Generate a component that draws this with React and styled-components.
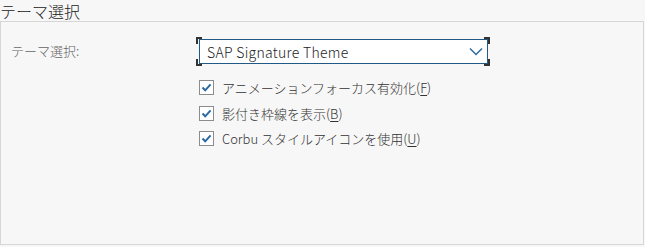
import React from "react";
import styled, { createGlobalStyle } from "styled-components";

const Global = createGlobalStyle`
  html, body { margin: 0; padding: 0; background: #f7f7f7; }
  body { font-family: "Noto Sans CJK JP", "Noto Sans", sans-serif; font-weight: 300; }
`;

const Page = styled.div`
  width: 645px;
  height: 247px;
  box-sizing: border-box;
  padding-right: 1px;
  display: flex;
  flex-direction: column;
`;

const Title = styled.div`
  font-size: 16px;
  line-height: 19px;
  height: 21px;
  box-sizing: border-box;
  padding-top: 2px;
  color: #222;
`;

const Group = styled.div`
  flex: 1;
  margin-bottom: 2px;
  border: 1px solid #d6d6d6;
  background: #f7f7f7;
  display: grid;
  grid-template-columns: 195px 1fr;
  align-content: start;
  padding-top: 15px;
`;

const Label = styled.div`
  padding-left: 10px;
  font-size: 13px;
  color: #666;
  height: 28px;
  line-height: 28px;
`;

const Controls = styled.div`
  display: flex;
  flex-direction: column;
`;

const SelectWrap = styled.div`
  position: relative;
  width: 294px;
  height: 29px;
  box-sizing: border-box;
  padding: 2px 2px 2px 3px;
`;

const Corner = styled.span`
  position: absolute;
  width: 4px;
  height: 5px;
  border-color: #333;
  border-style: solid;
  border-width: 0;
  ${(p) => (p.$v === "t" ? "top: 0;" : "bottom: 0;")}
  ${(p) => (p.$h === "l" ? "left: 0;" : "right: 0;")}
  ${(p) => (p.$v === "t" ? "border-top-width: 2px;" : "border-bottom-width: 2px;")}
  ${(p) => (p.$h === "l" ? "border-left-width: 2px;" : "border-right-width: 2px;")}
`;

const SelectBox = styled.div`
  height: 100%;
  box-sizing: border-box;
  border: 1px solid #215a86;
  background: #fff;
  display: flex;
  align-items: center;
  justify-content: space-between;
  padding: 0 4px 0 7px;
  font-size: 14px;
  color: #222;
  letter-spacing: 0.3px;
`;

const Options = styled.div`
  display: flex;
  flex-direction: column;
  margin-top: 14px;
  gap: 10.5px;
`;

const Row = styled.label`
  display: flex;
  align-items: center;
  gap: 8px;
  font-size: 13px;
  color: #333;
  height: 15px;
  padding-left: 3px;
`;

const Box = styled.span`
  width: 15px;
  height: 15px;
  box-sizing: border-box;
  border: 1px solid #8c8c8c;
  background: #fff;
  display: flex;
  align-items: center;
  justify-content: center;
`;

const Mn = styled.span`
  text-decoration: underline;
  text-underline-offset: 2px;
`;

const Check = () => (
  <Box>
    <svg width="11" height="11" viewBox="0 0 11 11">
      <path d="M1.5 5.5 L4.2 8.3 L9.6 2.3" fill="none" stroke="#2a6aa3" strokeWidth="2" />
    </svg>
  </Box>
);

const Chevron = () => (
  <svg width="14" height="9" viewBox="0 0 14 9">
    <path d="M1 1.5 L7 7.5 L13 1.5" fill="none" stroke="#2f6c9e" strokeWidth="1.5" />
  </svg>
);

export default function App() {
  return (
    <>
      <Global />
      <Page>
        <Title>テーマ選択</Title>
        <Group>
          <Label>テーマ選択:</Label>
          <Controls>
            <SelectWrap>
              <Corner $v="t" $h="l" />
              <Corner $v="t" $h="r" />
              <Corner $v="b" $h="l" />
              <Corner $v="b" $h="r" />
              <SelectBox>
                <span>SAP Signature Theme</span>
                <Chevron />
              </SelectBox>
            </SelectWrap>
            <Options>
              <Row>
                <Check />
                <span>アニメーションフォーカス有効化(<Mn>F</Mn>)</span>
              </Row>
              <Row>
                <Check />
                <span>影付き枠線を表示(<Mn>B</Mn>)</span>
              </Row>
              <Row>
                <Check />
                <span>Corbu スタイルアイコンを使用(<Mn>U</Mn>)</span>
              </Row>
            </Options>
          </Controls>
        </Group>
      </Page>
    </>
  );
}
